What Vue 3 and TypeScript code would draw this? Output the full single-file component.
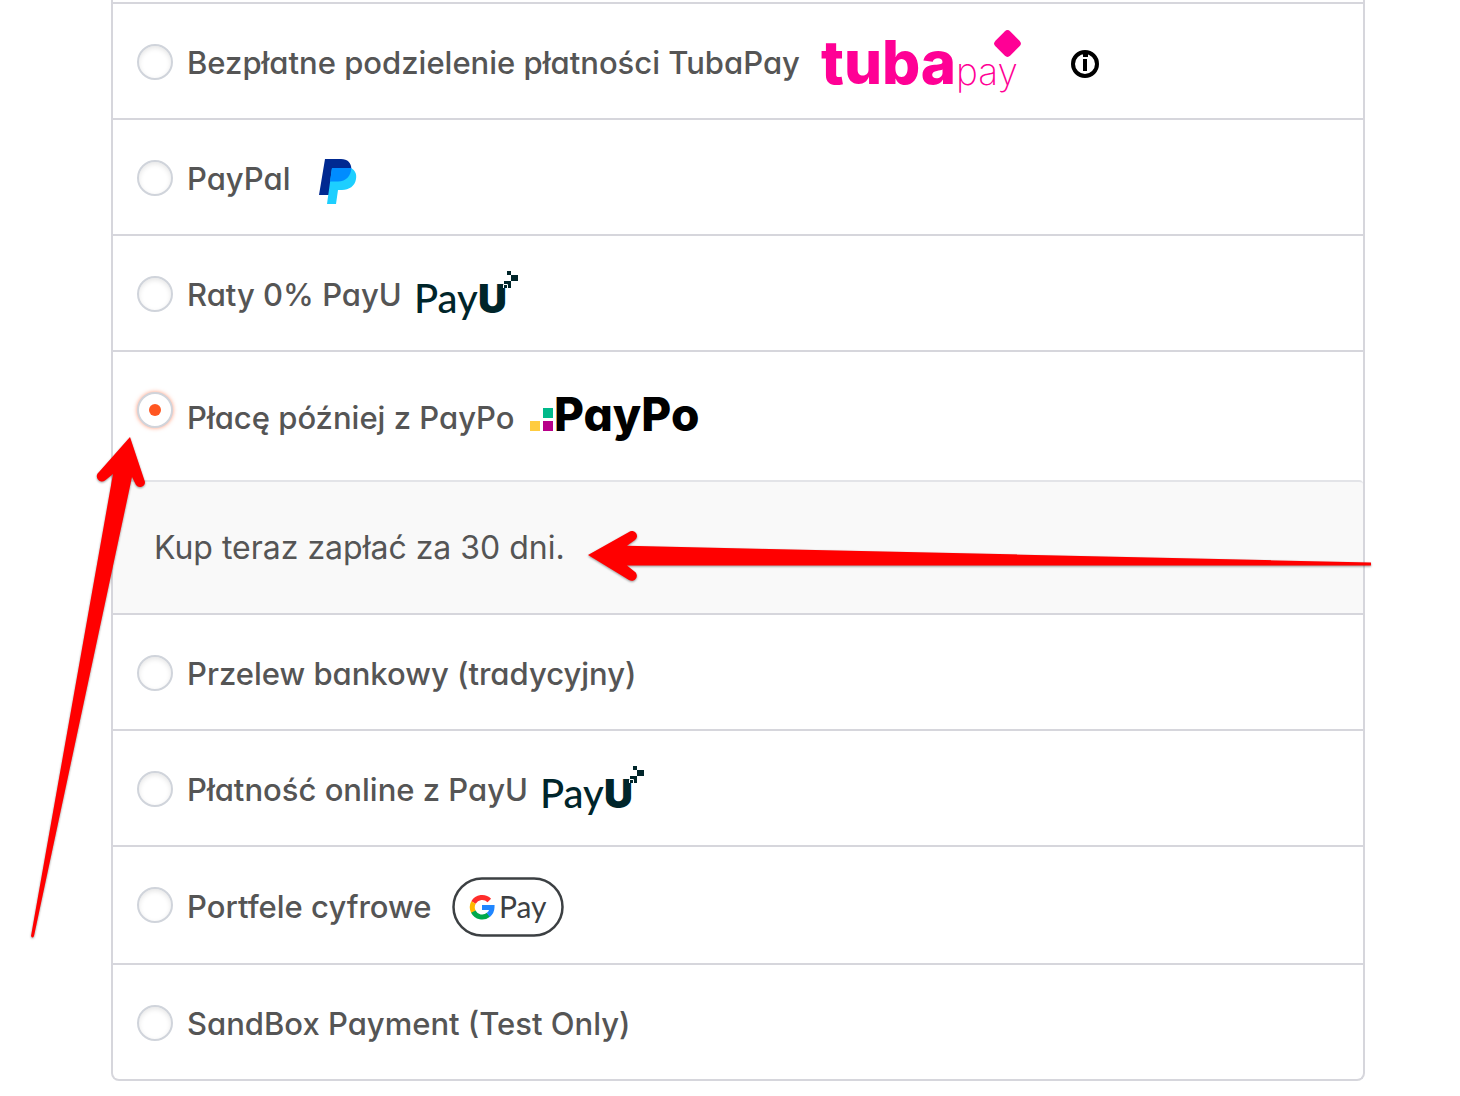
<script setup lang="ts">
import { ref } from 'vue'

type Logo = 'tubapay' | 'paypal' | 'payu' | 'paypo' | 'gpay'

interface Method {
  id: string
  label: string
  logo?: Logo
  info?: boolean
  note?: string
}

const methods: Method[] = [
  { id: 'tubapay', label: 'Bezpłatne podzielenie płatności TubaPay', logo: 'tubapay', info: true },
  { id: 'paypal', label: 'PayPal', logo: 'paypal' },
  { id: 'payu-raty', label: 'Raty 0% PayU', logo: 'payu' },
  { id: 'paypo', label: 'Płacę później z PayPo', logo: 'paypo', note: 'Kup teraz zapłać za 30 dni.' },
  { id: 'przelew', label: 'Przelew bankowy (tradycyjny)' },
  { id: 'payu', label: 'Płatność online z PayU', logo: 'payu' },
  { id: 'portfele', label: 'Portfele cyfrowe', logo: 'gpay' },
  { id: 'sandbox', label: 'SandBox Payment (Test Only)' },
]

const selected = ref('paypo')
</script>

<template>
  <main class="page">
    <ul class="methods">
      <li v-for="m in methods" :key="m.id" class="method">
        <div class="row" :class="m.logo ? `row-${m.logo}` : ''">
          <input :id="m.id" v-model="selected" class="radio" type="radio" name="payment" :value="m.id" />
          <label class="label" :for="m.id">
            <span>{{ m.label }}</span>

            <svg v-if="m.logo === 'tubapay'" class="logo" width="200" height="66" viewBox="0 0 200 66">
              <g fill="#ff0095">
                <text class="tuba" x="0" y="54">tuba</text>
                <text class="tuba-pay" x="135" y="55">pay</text>
                <rect x="176" y="3" width="21" height="21" rx="4" transform="rotate(45 186.500 13.500)" />
              </g>
            </svg>

            <svg v-else-if="m.logo === 'paypal'" class="logo" width="38" height="52" viewBox="0 -6 38 52">
              <path fill="#002991" d="M6 0H22C28.500 0 32.500 4 32.300 10C32 17 27 23 19 23L12 36H0Z" />
              <path fill="#1dcfff" d="M13 9H31.500C36 11 38 15 37 20C36 27 30 31 23 31H19L17 45H8Z" />
              <path fill="#008cff" d="M13 9H32.300C32 17 27 22.500 19 22.500H11Z" />
            </svg>

            <svg v-else-if="m.logo === 'payu'" class="logo" width="101" height="54" viewBox="0 -3 101 54">
              <g fill="#00252a">
                <text class="payu-pay" x="-3" y="42">Pay</text>
                <text class="payu-u" x="61" y="42">U</text>
                <path d="M90 0h4v4h-4zM94 4h7v6h-7zM87 10h7v7h-7z" />
              </g>
              <path fill="none" stroke="#fff" d="M86.500 17v-3.500h4v4" />
            </svg>

            <svg v-else-if="m.logo === 'paypo'" class="logo" width="170" height="50" viewBox="0 0 170 50">
              <path fill="#00b98a" d="M13 15h10v10H13z" />
              <path fill="#ffcc40" d="M0 28h10v10H0z" />
              <path fill="#b80089" d="M13 28h10v10H13z" />
              <text class="paypo" x="24" y="38">PayPo</text>
            </svg>

            <svg v-else-if="m.logo === 'gpay'" class="logo" width="112" height="60" viewBox="0 0 112 60">
              <rect x="1.500" y="1.500" width="109" height="57" rx="28.500" fill="#fff" stroke="#3c4043" stroke-width="2.500" />
              <g fill="none" stroke-width="5">
                <path stroke="#ff2d2b" d="M37.300 23.500A10 10 0 0 0 21.500 25.500" />
                <path stroke="#ffb800" d="M21.500 25.500A10 10 0 0 0 21.500 35" />
                <path stroke="#00a94b" d="M21.300 34.600A10 10 0 0 0 36.500 37.800" />
                <path stroke="#2086ff" d="M36.300 38A10 10 0 0 0 40 30.500H30" />
              </g>
              <text class="gpay" x="47" y="41">Pay</text>
            </svg>
          </label>
          <button v-if="m.info" class="info" type="button" aria-label="Informacje">
            <svg width="28" height="30" viewBox="0 -2 28 30">
              <circle cx="14" cy="14" r="12" fill="none" stroke="#000" stroke-width="4" />
              <path d="M12 3h5v4h-5zM12 9h4v12h-4z" />
            </svg>
          </button>
        </div>

        <div v-if="m.note" class="note">
          <p>{{ m.note }}</p>
          <svg class="arrow arrow-note" width="786" height="56" viewBox="0 0 786 56">
            <path d="M0 27L41 4A5 5 0 0 1 47 12L39 17.700L783 34.500V37.500H39L46.500 43.500A5 5 0 0 1 41 52Z" />
          </svg>
          <svg class="arrow arrow-radio" width="120" height="504" viewBox="0 0 120 504">
            <path d="M100 1L69 36A5 5 0 0 0 75 44.500L83 38L1 500Q2.500 503 4 500L102 41L106 49A5 5 0 0 0 115 46Z" />
          </svg>
        </div>
      </li>
    </ul>
  </main>
</template>

<style>
body {
  margin: 0;
  background: #fff;
}
</style>

<style scoped>
.page {
  padding: 0 95px 15px 111px;
  font-family: Inter, 'Liberation Sans', sans-serif;
  color: #555;
}

.methods {
  margin: 0;
  padding: 2px 0 0;
  list-style: none;
  border: 2px solid #d6d6dc;
  border-top: 0;
  border-radius: 0 0 8px 8px;
}

.method {
  border-top: 2px solid #d6d6dc;
}

.row {
  display: flex;
  align-items: center;
  box-sizing: border-box;
  min-height: 114px;
  padding: 4px 24px 0;
}

.row-paypo {
  min-height: 128px;
}

.row-gpay {
  min-height: 116px;
}

.radio {
  appearance: none;
  flex: none;
  align-self: flex-start;
  display: grid;
  place-items: center;
  box-sizing: border-box;
  width: 36px;
  height: 36px;
  margin: 36px 14px 0 0;
  border: 2px solid #d0d4db;
  border-radius: 50%;
  background: #fff;
  box-shadow: inset 0 2px 5px rgba(0, 0, 0, 0.1);
}

.radio:checked {
  box-shadow: 0 0 4px rgba(255, 87, 34, 0.6);
}

.radio:checked::before {
  content: '';
  width: 12px;
  height: 12px;
  border-radius: 50%;
  background: #ff5621;
}

.label {
  display: flex;
  align-items: center;
  gap: 15px;
  font-size: 31px;
  font-weight: 500;
  line-height: 40px;
  white-space: nowrap;
  font-feature-settings: 'cv11';
}

.row-tubapay .label,
.row-gpay .label {
  gap: 21px;
}

.row-paypal .label {
  gap: 29px;
}

.logo {
  flex: none;
  overflow: visible;
}

.tuba {
  font-size: 60px;
  font-weight: 800;
  font-feature-settings: normal;
}

.tuba-pay {
  font-size: 37px;
  font-weight: 200;
  font-feature-settings: normal;
}

.payu-pay {
  font-family: Lato, sans-serif;
  font-size: 40px;
  font-weight: 500;
}

.payu-u {
  font-size: 40px;
  font-weight: 900;
}

.paypo {
  font-size: 46px;
  font-weight: 800;
  fill: #000;
}

.gpay {
  font-family: Lato, sans-serif;
  font-size: 30px;
  font-weight: 400;
  fill: #3c4043;
}

.info {
  display: flex;
  margin-left: 50px;
  padding: 0;
  border: 0;
  background: none;
}

.note {
  position: relative;
  padding: 44px 41px;
  border-top: 2px solid #e3e4e8;
  border-radius: 0 4px 0 0;
  background: #f9f9f9;
}

.note p {
  margin: 0;
  font-size: 32px;
  line-height: 43px;
}

.arrow {
  position: absolute;
  fill: #f00;
  filter: drop-shadow(0 1px 1px rgba(0, 0, 0, 0.4));
  pointer-events: none;
}

.arrow-note {
  top: 46px;
  left: 475px;
}

.arrow-radio {
  top: -46px;
  left: -83px;
}
</style>
